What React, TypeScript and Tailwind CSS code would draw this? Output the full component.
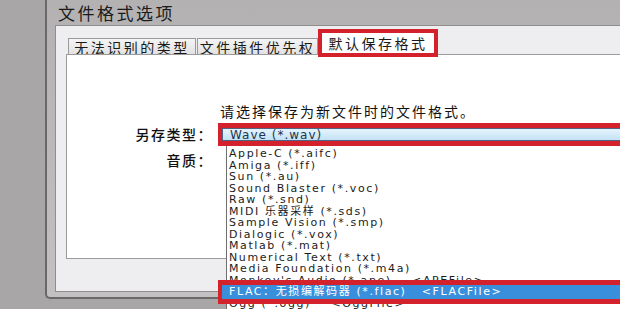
import React from 'react'

const formats = [
  'Apple-C (*.aifc)',
  'Amiga (*.iff)',
  'Sun (*.au)',
  'Sound Blaster (*.voc)',
  'Raw (*.snd)',
  'MIDI 乐器采样 (*.sds)',
  'Sample Vision (*.smp)',
  'Dialogic (*.vox)',
  'Matlab (*.mat)',
  'Numerical Text (*.txt)',
  'Media Foundation (*.m4a)',
  "Monkey's Audio (*.ape)    <APEFile>",
]

const cjk = { fontFamily: '"Noto Sans CJK SC", "Noto Sans", sans-serif' }
const latin = { fontFamily: '"DejaVu Sans", "Noto Sans CJK SC", sans-serif' }

const App = () => {
  return (
    <div
      className="w-[620px] h-[309px] overflow-hidden bg-[#a8a6a7] flex pl-[45px]"
      style={cjk}
    >
      {/* window frame */}
      <div className="w-[640px] shrink-0 h-[299px] flex flex-col border-l-2 border-b-2 border-[#6a6869] rounded-bl-[5px] bg-gradient-to-b from-[#b3b1b2] to-[#c2c0c1]">
        {/* title bar */}
        <div className="h-[25px] shrink-0 flex items-center pl-[11px] text-[17px] tracking-[2.5px] text-[#1b1b1b]">
          文件格式选项
        </div>

        {/* dialog body */}
        <div className="flex-1 ml-[8px] mb-[5px] border-l border-t border-b border-[#8f8d8e] bg-[#eeeef0] pl-[10px] pt-[12px] flex flex-col">
          {/* tabs */}
          <div className="h-[16px] flex items-end pl-[2px] text-[14px] tracking-[2.5px] text-[#1a1a1a]">
            <div className="w-[128px] h-[16px] flex items-center justify-center border border-b-0 border-[#9a9a9a] bg-gradient-to-b from-[#f4f4f4] to-[#e2e2e2] leading-none">
              无法识别的类型
            </div>
            <div className="w-[121px] h-[16px] ml-[1px] flex items-center justify-center border border-b-0 border-[#9a9a9a] bg-gradient-to-b from-[#f4f4f4] to-[#e2e2e2] leading-none">
              文件插件优先权
            </div>
            <div className="relative z-10 w-[120px] h-[28px] -mb-[3px] flex items-center justify-center border-4 border-[#d3222c] bg-white leading-none">
              默认保存格式
            </div>
          </div>

          {/* tab panel */}
          <div className="h-[205px] border border-[#9b9b9b] bg-white flex flex-col">
            <div className="mt-[48px] pl-[153px] leading-[16px] text-[14px] tracking-[2px] text-[#111]">
              请选择保存为新文件时的文件格式。
            </div>

            <div className="mt-[4px] flex">
              {/* labels */}
              <div className="w-[151px] shrink-0 pr-[5px] flex flex-col items-end text-[14px] tracking-[1.5px] font-medium text-[#111]">
                <div className="h-[23px] flex items-center">另存类型：</div>
                <div className="mt-[6px] leading-[16px]">音质：</div>
              </div>

              {/* combo + dropdown list */}
              <div className="w-[420px] shrink-0 flex flex-col" style={latin}>
                <div className="h-[23px] border-y-[5px] border-l-[4px] border-[#d3222c]">
                  <div className="h-full border border-[#4f6485] bg-gradient-to-b from-[#e6f4fc] to-[#c3e2f5] pl-[7px] flex items-center text-[12px] tracking-[1px] text-[#1d3550] leading-none">
                    Wave (*.wav)
                  </div>
                </div>
                <div className="ml-[8px] h-[200px] border-l border-[#6f6f6f] bg-white pt-[2px] text-[11px] tracking-[1.6px] leading-[11.5px] text-[#1c1c1c]">
                  {formats.map((f) => (
                    <div key={f} className="pl-[2px] h-[11.5px] whitespace-pre">
                      {f}
                    </div>
                  ))}
                  <div className="relative h-[11.5px] whitespace-pre">
                    <div className="absolute left-[-9px] right-[-20px] top-[-6px] bottom-[-6px] border-y-[5px] border-l-[4px] border-[#d3222c] bg-[#3a8fdd] text-white pl-[7px] flex items-center z-10">
                      {'FLAC：无损编解码器 (*.flac)   <FLACFile>'}
                    </div>
                  </div>
                  <div className="pl-[2px] h-[11.5px] whitespace-pre">
                    {'Ogg (*.ogg)    <OggFile>'}
                  </div>
                </div>
              </div>
            </div>
          </div>
        </div>
      </div>
    </div>
  )
}

export default App
